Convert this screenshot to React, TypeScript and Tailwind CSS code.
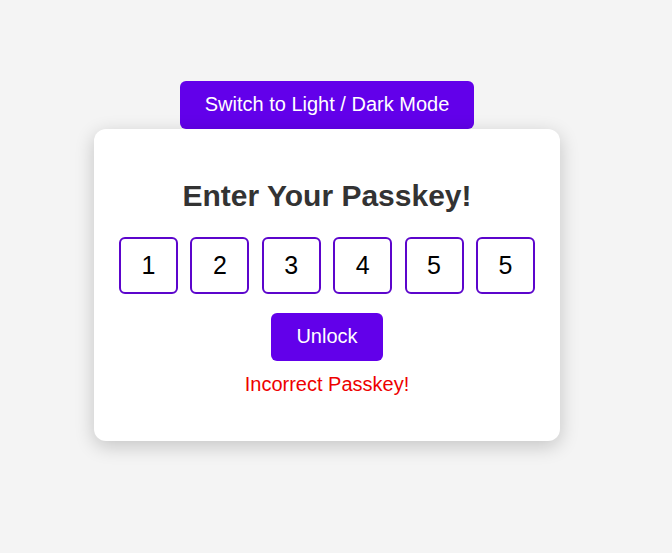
import { useState } from "react";

const buttonClass =
  "h-12 cursor-pointer rounded-md bg-[#6200ea] px-[25px] pb-0.5 text-[20px] leading-6 text-white";

export default function App() {
  const [digits, setDigits] = useState(["1", "2", "3", "4", "5", "5"]);
  const [dark, setDark] = useState(false);
  const [message, setMessage] = useState("Incorrect Passkey!");

  return (
    <main
      className={`flex min-h-screen flex-col items-center pt-[81px] pr-[18px] font-['Liberation_Sans',Arial,sans-serif] ${
        dark ? "bg-[#121212] text-white" : "bg-[#f4f4f4] text-[#333333]"
      }`}
    >
      <button type="button" className={buttonClass} onClick={() => setDark(!dark)}>
        Switch to Light / Dark Mode
      </button>
      <form
        className={`flex w-full max-w-[466px] flex-col items-center rounded-xl px-[25px] pt-[49px] pb-[45px] shadow-[0_5px_19px_rgba(0,0,0,0.2)] ${
          dark ? "bg-[#1e1e1e]" : "bg-white"
        }`}
        onSubmit={(event) => {
          event.preventDefault();
          setMessage("Incorrect Passkey!");
        }}
      >
        <h1 className="text-[30px] leading-9 font-bold">Enter Your Passkey!</h1>
        <div className="mt-[23px] flex w-full justify-between">
          {digits.map((digit, index) => (
            <input
              key={index}
              type="text"
              inputMode="numeric"
              maxLength={1}
              aria-label={`Digit ${index + 1}`}
              value={digit}
              onChange={(event) =>
                setDigits(digits.map((d, i) => (i === index ? event.target.value : d)))
              }
              className="h-[57px] w-[59px] rounded-md border-2 border-[#5c05cc] bg-white text-center text-[25px] text-black"
            />
          ))}
        </div>
        <button type="submit" className={`mt-[19px] ${buttonClass}`}>
          Unlock
        </button>
        <p role="alert" className="mt-[11px] text-[20px] leading-6 text-[#ee0000]">
          {message}
        </p>
      </form>
    </main>
  );
}
